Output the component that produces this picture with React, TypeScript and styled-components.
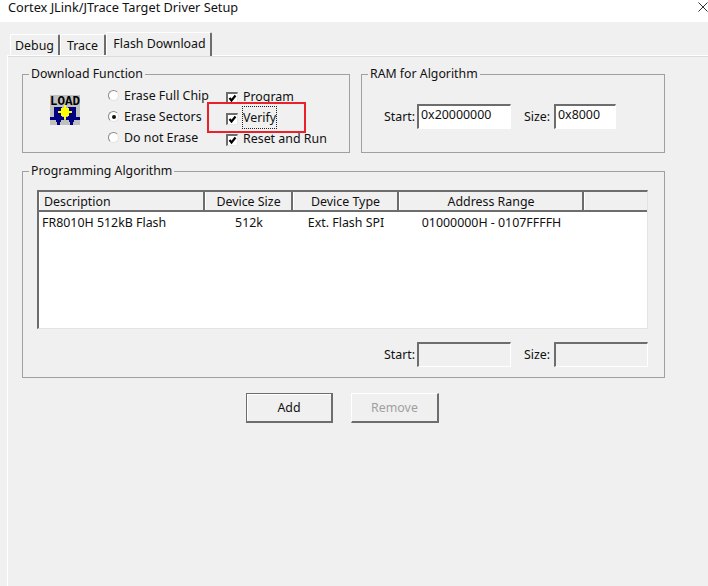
import styled, { createGlobalStyle } from "styled-components";

const GlobalStyle = createGlobalStyle`
  html, body {
    margin: 0;
    padding: 0;
    background: #f0f0f0;
  }
  * {
    box-sizing: border-box;
  }
`;

const Window = styled.div`
  width: 708px;
  height: 586px;
  background: #f0f0f0;
  color: #111;
  font-family: "Noto Sans", "Liberation Sans", sans-serif;
  font-size: 12.4px;
  overflow: hidden;
`;
const TitleBar = styled.div`
  height: 22px;
  background: #fff;
  display: flex;
  align-items: flex-start;
  justify-content: space-between;
  padding-left: 8px;
  font-size: 12.75px;
  line-height: 14px;
`;
const CloseIcon = styled.svg`
  width: 10px;
  height: 10px;
  margin-top: 2px;
`;
const TabStrip = styled.div`
  height: 33px;
  display: flex;
  align-items: flex-end;
  padding-left: 10px;
`;
const Tab = styled.div<{ $active?: boolean; $width: number }>`
  height: ${(p) => (p.$active ? "24px" : "21px")};
  width: ${(p) => p.$width}px;
  margin-bottom: ${(p) => (p.$active ? "-1px" : "0")};
  padding: ${(p) => (p.$active ? "0 0 2px 2px" : "0")};
  border: 1px solid #fff;
  border-right: 2px solid #6d6d6d;
  border-bottom: none;
  border-radius: 2px 2px 0 0;
  display: flex;
  align-items: center;
  justify-content: center;
  background: #f0f0f0;
  position: relative;
`;
const Panel = styled.div`
  height: 531px;
  margin-left: 7px;
  border-top: 1px solid #fff;
  border-left: 1px solid #fff;
  padding: 10px 43px 0 14px;
  box-shadow: inset 0 1px 0 #dcdcdc;
`;
const TopRow = styled.div`
  display: flex;
  gap: 11px;
  margin-bottom: 10px;
`;
const Group = styled.fieldset<{ $width?: number; $height: number }>`
  width: ${(p) => (p.$width ? `${p.$width}px` : "100%")};
  height: ${(p) => p.$height}px;
  margin: 0;
  padding: 0;
  border: 1px solid #a0a0a0;
  min-width: 0;
`;
const Legend = styled.legend`
  margin-left: 6px;
  padding: 0 2px;
  line-height: 16px;
  font-size: 12.3px;
`;
const DownloadBody = styled.div`
  display: flex;
  padding: 3px 0 0 27px;
`;
const LoadIcon = styled.svg`
  width: 30px;
  height: 30px;
  margin-top: 10px;
  margin-right: 28px;
  flex: none;
`;
const OptionColumn = styled.div<{ $width: number; $top: number }>`
  width: ${(p) => p.$width}px;
  padding-top: ${(p) => p.$top}px;
  display: flex;
  flex-direction: column;
  position: relative;
`;
const Option = styled.div`
  height: 21px;
  display: flex;
  align-items: center;
  white-space: nowrap;
`;
const Radio = styled.span<{ $on?: boolean }>`
  width: 11px;
  height: 11px;
  margin-right: 5px;
  border-radius: 50%;
  background: #fff;
  border: 1px solid;
  border-color: #8a8a8a #e4e4e4 #e4e4e4 #8a8a8a;
  display: flex;
  align-items: center;
  justify-content: center;
  &::after {
    content: "";
    width: 4px;
    height: 4px;
    border-radius: 50%;
    background: ${(p) => (p.$on ? "#111" : "transparent")};
  }
`;
const Check = styled.span`
  width: 12px;
  height: 12px;
  margin-right: 5px;
  background: #fff;
  border: 1px solid;
  border-width: 2px 1px 1px 2px;
  border-color: #6d6d6d #e8e8e8 #e8e8e8 #6d6d6d;
  display: flex;
  svg {
    width: 9px;
    height: 9px;
  }
`;
const CheckText = styled.span`
  position: relative;
  top: -1px;
`;
const FocusLabel = styled(CheckText)`
  outline: 1px dotted #222;
  padding: 2px 0;
`;
const Highlight = styled.div`
  position: absolute;
  left: -19px;
  top: 17px;
  width: 99px;
  height: 31px;
  border: 2px solid #e8212b;
  pointer-events: none;
`;
const RamBody = styled.div`
  display: flex;
  align-items: center;
  padding: 22px 0 0 22px;
`;
const FieldLabel = styled.span<{ $width: number; $before?: number }>`
  width: ${(p) => p.$width}px;
  margin-left: ${(p) => p.$before ?? 0}px;
  white-space: nowrap;
`;
const Field = styled.div<{ $width: number; $disabled?: boolean }>`
  width: ${(p) => p.$width}px;
  height: 25px;
  padding: 0 2px;
  line-height: 18px;
  border: 1px solid;
  border-color: #6d6d6d #fff #fff #6d6d6d;
  border-width: 2px 1px 1px 2px;
  background: ${(p) => (p.$disabled ? "#f0f0f0" : "#fff")};
`;
const AlgorithmBody = styled.div`
  padding: 11px 16px 0 14px;
`;
const List = styled.div`
  height: 139px;
  background: #fff;
  border: 1px solid;
  border-color: #6d6d6d #e3e3e3 #e3e3e3 #6d6d6d;
  border-width: 2px 1px 1px 2px;
`;
const HeaderRow = styled.div`
  display: flex;
  height: 20px;
  background: #f0f0f0;
  border-bottom: 2px solid #6d6d6d;
`;
const HeaderCell = styled.div<{ $width: number; $left?: boolean }>`
  width: ${(p) => p.$width}px;
  flex: none;
  border-right: 2px solid #6d6d6d;
  border-left: 1px solid #fff;
  display: flex;
  align-items: center;
  justify-content: ${(p) => (p.$left ? "flex-start" : "center")};
  padding-left: ${(p) => (p.$left ? "4px" : "0")};
  white-space: nowrap;
  &:last-child {
    flex: 1;
    border-right: none;
  }
`;
const DataRow = styled.div`
  display: flex;
  height: 20px;
`;
const DataCell = styled.div<{ $width: number; $left?: boolean }>`
  width: ${(p) => p.$width}px;
  flex: none;
  display: flex;
  align-items: center;
  justify-content: ${(p) => (p.$left ? "flex-start" : "center")};
  padding-left: ${(p) => (p.$left ? "3px" : "0")};
  white-space: nowrap;
`;
const RangeRow = styled.div`
  display: flex;
  justify-content: flex-end;
  align-items: center;
  padding-top: 13px;
`;
const Buttons = styled.div`
  display: flex;
  gap: 18px;
  padding: 15px 0 0 224px;
`;
const Button = styled.div<{ $width: number; $disabled?: boolean }>`
  width: ${(p) => p.$width}px;
  height: 30px;
  display: flex;
  align-items: center;
  justify-content: center;
  border: 1px solid;
  border-color: ${(p) => (p.$disabled ? "#fff #6d6d6d #6d6d6d #fff" : "#6d6d6d")};
  border-right-width: 2px;
  border-bottom-width: 2px;
  color: ${(p) => (p.$disabled ? "#a0a0a0" : "#111")};
  box-shadow: ${(p) => (p.$disabled ? "none" : "inset 1px 1px 0 #fff")};
`;

const CheckMark = () => (
  <svg viewBox="0 0 9 9">
    <path d="M1.5 4 L3.5 6.5 L7.5 1.5" fill="none" stroke="#000" strokeWidth="2.2" />
  </svg>
);

const COLUMNS = [166, 88, 106, 185, 64];

const App = () => (
  <Window>
    <GlobalStyle />
    <TitleBar>
      <span>Cortex JLink/JTrace Target Driver Setup</span>
      <CloseIcon viewBox="0 0 10 10">
        <path d="M0.5 0.5 L9.5 9.5 M9.5 0.5 L0.5 9.5" stroke="#333" fill="none" />
      </CloseIcon>
    </TitleBar>
    <TabStrip>
      <Tab $width={50}>Debug</Tab>
      <Tab $width={46}>Trace</Tab>
      <Tab $width={106} $active>
        Flash Download
      </Tab>
    </TabStrip>
    <Panel>
      <TopRow>
        <Group $width={328} $height={87}>
          <Legend>Download Function</Legend>
          <DownloadBody>
            <LoadIcon viewBox="0 0 30 30">
              <rect width="30" height="30" fill="#c0c0c0" />
              <text
                x="0"
                y="10"
                fontFamily="Liberation Mono"
                fontWeight="700"
                fontSize="13"
                textLength="30"
                lengthAdjust="spacingAndGlyphs"
              >
                LOAD
              </text>
              <path d="M4 12h8v10h2v3h-3v2h-1v3H7v-3H6v-2H0v-3h4z" fill="#000080" />
              <path d="M26 12h-8v10h-2v3h3v2h1v3h3v-3h1v-2h6v-3h-4z" fill="#000080" />
              <path d="M14 10h2v3h3v3h3v2h-3v3h-3v3h-2v-3h-3v-3H8v-2h3v-3h3z" fill="#ffff00" />
            </LoadIcon>
            <OptionColumn $width={118} $top={0}>
              <Option>
                <Radio />
                Erase Full Chip
              </Option>
              <Option>
                <Radio $on />
                Erase Sectors
              </Option>
              <Option>
                <Radio />
                Do not Erase
              </Option>
            </OptionColumn>
            <OptionColumn $width={110} $top={2}>
              <Option>
                <Check>
                  <CheckMark />
                </Check>
                <CheckText>Program</CheckText>
              </Option>
              <Option>
                <Check>
                  <CheckMark />
                </Check>
                <FocusLabel>Verify</FocusLabel>
              </Option>
              <Option>
                <Check>
                  <CheckMark />
                </Check>
                <CheckText>Reset and Run</CheckText>
              </Option>
              <Highlight />
            </OptionColumn>
          </DownloadBody>
        </Group>
        <Group $width={304} $height={87}>
          <Legend>RAM for Algorithm</Legend>
          <RamBody>
            <FieldLabel $width={33}>Start:</FieldLabel>
            <Field $width={94}>0x20000000</Field>
            <FieldLabel $width={30} $before={13}>
              Size:
            </FieldLabel>
            <Field $width={62}>0x8000</Field>
          </RamBody>
        </Group>
      </TopRow>
      <Group $height={215}>
        <Legend>Programming Algorithm</Legend>
        <AlgorithmBody>
          <List>
            <HeaderRow>
              <HeaderCell $width={COLUMNS[0]} $left>
                Description
              </HeaderCell>
              <HeaderCell $width={COLUMNS[1]}>Device Size</HeaderCell>
              <HeaderCell $width={COLUMNS[2]}>Device Type</HeaderCell>
              <HeaderCell $width={COLUMNS[3]}>Address Range</HeaderCell>
              <HeaderCell $width={COLUMNS[4]} />
            </HeaderRow>
            <DataRow>
              <DataCell $width={COLUMNS[0]} $left>
                FR8010H 512kB Flash
              </DataCell>
              <DataCell $width={COLUMNS[1]}>512k</DataCell>
              <DataCell $width={COLUMNS[2]}>Ext. Flash SPI</DataCell>
              <DataCell $width={COLUMNS[3]}>01000000H - 0107FFFFH</DataCell>
            </DataRow>
          </List>
          <RangeRow>
            <FieldLabel $width={33}>Start:</FieldLabel>
            <Field $width={94} $disabled />
            <FieldLabel $width={30} $before={13}>
              Size:
            </FieldLabel>
            <Field $width={94} $disabled />
          </RangeRow>
        </AlgorithmBody>
      </Group>
      <Buttons>
        <Button $width={87}>Add</Button>
        <Button $width={88} $disabled>
          Remove
        </Button>
      </Buttons>
    </Panel>
  </Window>
);

export default App;
